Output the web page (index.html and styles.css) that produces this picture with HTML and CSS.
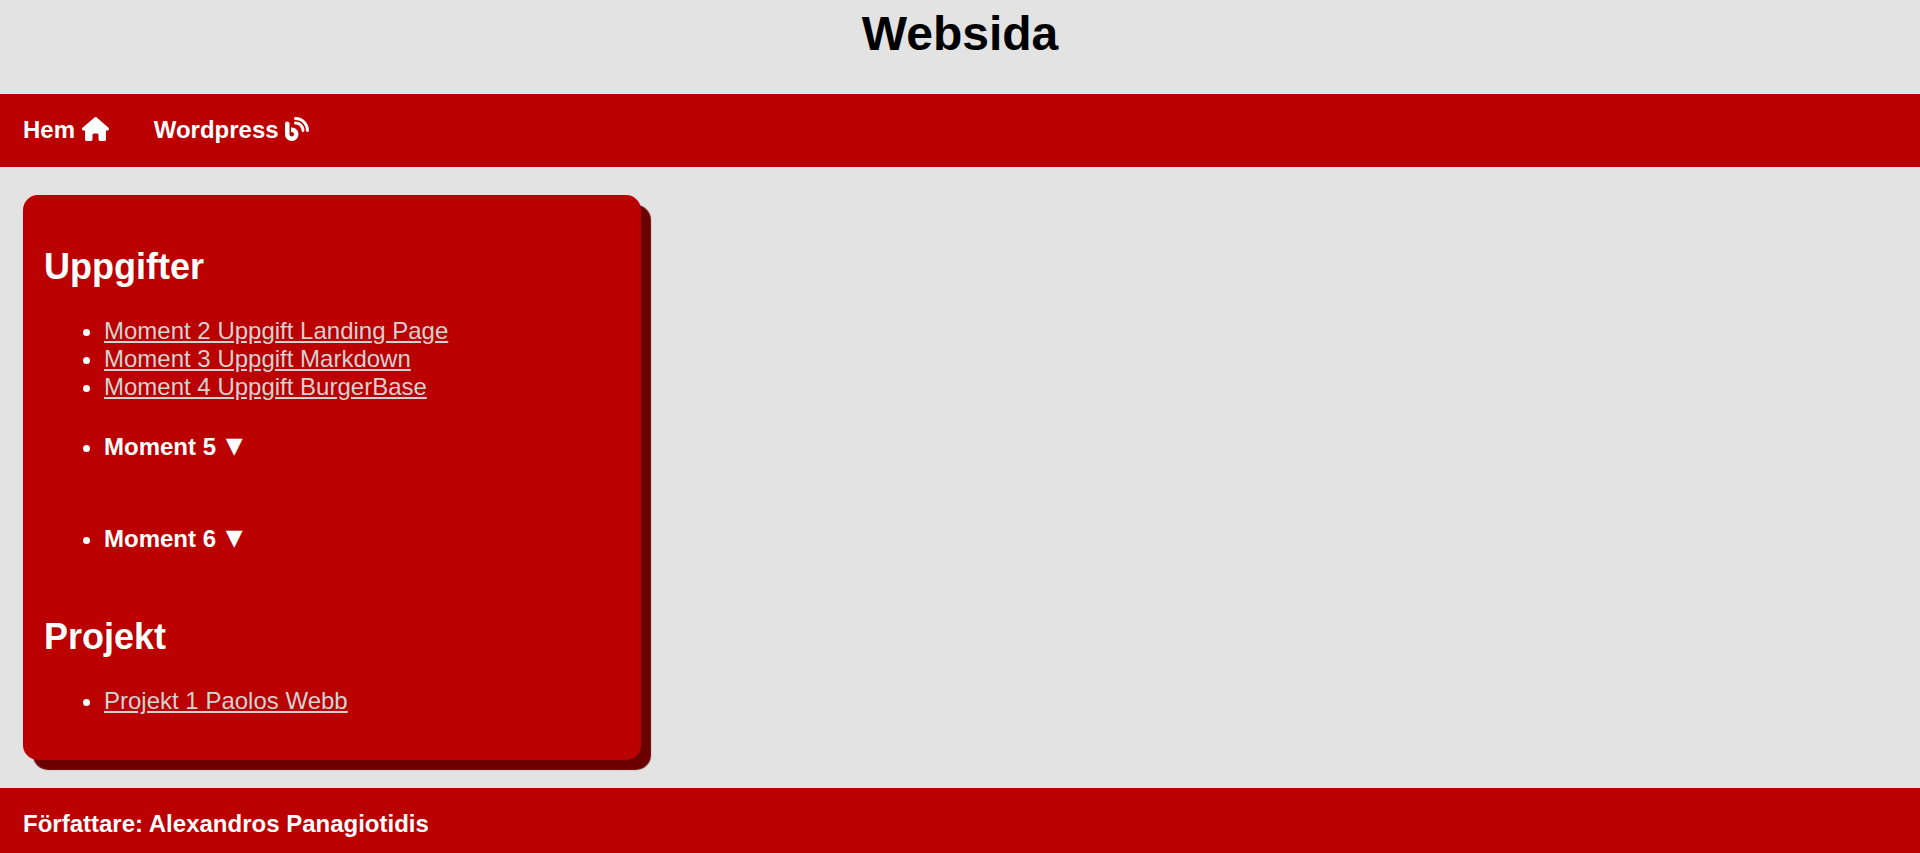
FILE: index.html
```html
<!DOCTYPE html>
<html lang="sv">
<head>
  <meta charset="utf-8">
  <meta name="viewport" content="width=device-width, initial-scale=1">
  <title>Websida</title>
  <link rel="stylesheet" href="styles.css">
</head>
<body>
  <header class="site-header">
    <h1 class="site-title">Websida</h1>
  </header>

  <nav class="site-nav">
    <a class="nav-link" href="#">Hem <svg class="icon icon-house" viewBox="0 0 576 512" aria-hidden="true"><path d="M575.8 255.5c0 18-15 32.1-32 32.1l-32 0 .7 160.2c0 2.7-.2 5.4-.5 8.1l0 16.2c0 22.1-17.9 40-40 40l-16 0c-1.1 0-2.2 0-3.3-.1c-1.4 .1-2.8 .1-4.2 .1L416 512l-24 0c-22.1 0-40-17.9-40-40l0-24 0-64c0-17.7-14.3-32-32-32l-64 0c-17.7 0-32 14.3-32 32l0 64 0 24c0 22.1-17.9 40-40 40l-24 0-31.9 0c-1.5 0-3-.1-4.5-.2c-1.2 .1-2.4 .2-3.6 .2l-16 0c-22.1 0-40-17.9-40-40l0-112c0-.9 0-1.9 .1-2.8l0-69.7-32 0c-18 0-32-14-32-32.1c0-9 3-17 10-24L266.4 8c7-7 15-8 22-8s15 2 21 7L564.8 231.5c8 7 12 15 11 24z"/></svg></a>
    <a class="nav-link" href="#">Wordpress <svg class="icon icon-blog" viewBox="0 0 512 512" aria-hidden="true"><path d="M192 32c0 17.7 14.3 32 32 32c123.7 0 224 100.3 224 224c0 17.7 14.3 32 32 32s32-14.3 32-32C512 128.9 383.1 0 224 0c-17.7 0-32 14.3-32 32zm0 96c0 17.7 14.3 32 32 32c70.7 0 128 57.3 128 128c0 17.7 14.3 32 32 32s32-14.3 32-32c0-106-86-192-192-192c-17.7 0-32 14.3-32 32zM96 144c0-26.5-21.5-48-48-48S0 117.5 0 144L0 368c0 79.5 64.5 144 144 144s144-64.5 144-144s-64.5-144-144-144l-16 0 0 96 16 0c26.5 0 48 21.5 48 48s-21.5 48-48 48s-48-21.5-48-48l0-224z"/></svg></a>
  </nav>

  <main class="content">
    <section class="card">
      <h2 class="card-heading">Uppgifter</h2>
      <ul class="list">
        <li><a class="list-link" href="#">Moment 2 Uppgift Landing Page</a></li>
        <li><a class="list-link" href="#">Moment 3 Uppgift Markdown</a></li>
        <li><a class="list-link" href="#">Moment 4 Uppgift BurgerBase</a></li>
        <li class="group"><button class="toggle" type="button" aria-expanded="false">Moment 5 <span class="arrow">▼</span></button></li>
        <li class="group"><button class="toggle" type="button" aria-expanded="false">Moment 6 <span class="arrow">▼</span></button></li>
      </ul>
      <h2 class="card-heading">Projekt</h2>
      <ul class="list">
        <li><a class="list-link" href="#">Projekt 1 Paolos Webb</a></li>
      </ul>
    </section>
  </main>

  <footer class="site-footer">
    <p class="author">Författare: Alexandros Panagiotidis</p>
  </footer>
</body>
</html>
```

FILE: styles.css
```css
* {
  box-sizing: border-box;
}

html {
  background: #e3e3e3;
}

body {
  display: flex;
  flex-direction: column;
  min-height: 100vh;
  margin: 0;
  color: #fff;
  font-family: "Liberation Sans", Arial, sans-serif;
  font-size: 24px;
  line-height: 28px;
}

.site-header {
  padding: 7px 24px 33px;
  text-align: center;
}

.site-title {
  margin: 0;
  color: #000;
  font-size: 48px;
  line-height: 54px;
}

.site-nav {
  display: flex;
  flex-wrap: wrap;
  gap: 45px;
  padding: 22px 23px 23px;
  background: #ba0000;
}

.nav-link {
  color: #fff;
  font-weight: bold;
  text-decoration: none;
}

.icon {
  height: 24px;
  fill: currentColor;
  vertical-align: -3px;
}

.icon-house {
  width: 27px;
}

.icon-blog {
  width: 24px;
}

.content {
  padding: 28px 23px;
}

.card {
  width: 33%;
  min-width: 420px;
  padding: 21px 21px 14px;
  border-radius: 15px;
  background: #ba0000;
  box-shadow: 10px 10px 1px #6a0000;
}

.card-heading {
  margin: 30px 0;
  font-size: 36px;
  line-height: 41px;
}

.list {
  margin: 30px 0 31px;
  padding-left: 60px;
}

.list-link {
  color: #d3d3d3;
}

.group {
  padding: 32px 0;
}

.toggle {
  padding: 0;
  border: 0;
  background: none;
  color: inherit;
  font: inherit;
  font-weight: bold;
  cursor: pointer;
}

.arrow {
  margin-left: 3px;
  font-family: "DejaVu Sans", sans-serif;
  font-size: 22px;
  line-height: 1;
  vertical-align: 2px;
}

.site-footer {
  flex-grow: 1;
  padding: 22px 23px 15px;
  background: #ba0000;
}

.author {
  margin: 0;
  font-weight: bold;
}
```
